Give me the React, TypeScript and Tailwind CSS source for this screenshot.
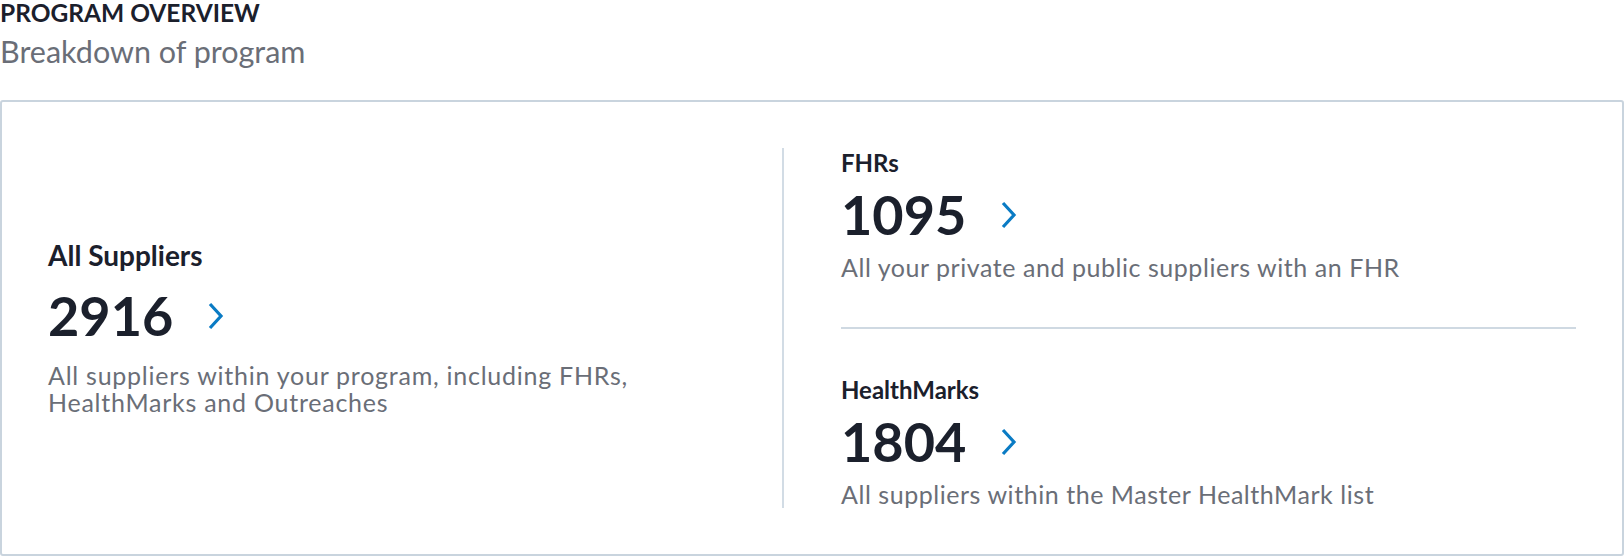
import React from 'react'

type Stat = {
  label: string
  value: number
  description: React.ReactNode
}

const Chevron: React.FC = () => (
  <svg className="w-[17px] h-[28px] text-[#0a7bc4]" viewBox="0 0 17 28" fill="none">
    <path d="M3 2 L14 14 L3 26" stroke="currentColor" strokeWidth={3.2} strokeLinecap="butt" strokeLinejoin="miter" />
  </svg>
)

const StatValue: React.FC<{ value: number; className?: string }> = ({ value, className = '' }) => (
  <div className={`flex items-center gap-[34px] ${className}`}>
    <span className="text-[54px] leading-[56px] font-bold text-[#1b202c]">{value}</span>
    <Chevron />
  </div>
)

const allSuppliers: Stat = {
  label: 'All Suppliers',
  value: 2916,
  description: 'All suppliers within your program, including FHRs, HealthMarks and Outreaches',
}

const fhrs: Stat = {
  label: 'FHRs',
  value: 1095,
  description: 'All your private and public suppliers with an FHR',
}

const healthMarks: Stat = {
  label: 'HealthMarks',
  value: 1804,
  description: 'All suppliers within the Master HealthMark list',
}

const SmallStat: React.FC<{ stat: Stat }> = ({ stat }) => (
  <div>
    <div className="text-[24px] leading-[30px] font-bold text-[#1b202c]">{stat.label}</div>
    <StatValue value={stat.value} className="mt-[9px]" />
    <div className="mt-[10px] text-[25px] leading-[28px] tracking-[0.55px] text-[#6a6e77]">{stat.description}</div>
  </div>
)

export default function App() {
  return (
    <div className="w-[1624px] h-[556px] bg-white font-['Lato',sans-serif]">
      <h2 className="text-[24.5px] leading-[26px] font-bold text-[#1b202c]">PROGRAM OVERVIEW</h2>
      <p className="mt-[7px] text-[30.5px] leading-[36px] text-[#6a6e77]">Breakdown of program</p>

      <div className="mt-[31px] h-[456px] border-2 border-[#c9d4de] rounded-[3px] p-[46px] flex">
        {/* Left: total */}
        <div className="w-[734px] flex items-center">
          <div>
            <div className="text-[28px] leading-[28px] font-bold text-[#1b202c]">{allSuppliers.label}</div>
            <StatValue value={allSuppliers.value} className="mt-[19px]" />
            <div className="mt-[18px] max-w-[650px] text-[25px] leading-[27px] tracking-[0.75px] text-[#6a6e77]">
              {allSuppliers.description}
            </div>
          </div>
        </div>

        <div className="w-[2px] bg-[#d2dce5]" />

        {/* Right: breakdown */}
        <div className="flex-1 pl-[57px] flex flex-col">
          <SmallStat stat={fhrs} />
          <div className="mt-[46px] h-[2px] bg-[#cfd9e2]" />
          <div className="mt-[46px]">
            <SmallStat stat={healthMarks} />
          </div>
        </div>
      </div>
    </div>
  )
}
